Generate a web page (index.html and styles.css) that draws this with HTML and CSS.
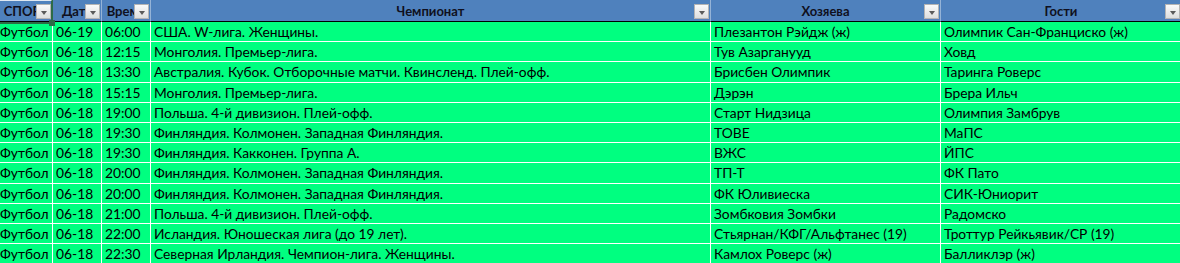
FILE: index.html
```html
<!DOCTYPE html>
<html lang="ru">
<head>
<meta charset="utf-8">
<title>Матчи</title>
<link rel="stylesheet" href="styles.css">
</head>
<body>
<div class="sheet">
  <div class="grid">
    <div class="hcell"><span class="htext">СПОРТ</span><span class="filter"></span></div>
    <div class="hcell"><span class="htext">Дата</span><span class="filter"></span></div>
    <div class="hcell"><span class="htext">Время</span><span class="filter"></span></div>
    <div class="hcell"><span class="htext">Чемпионат</span><span class="filter"></span></div>
    <div class="hcell"><span class="htext">Хозяева</span><span class="filter"></span></div>
    <div class="hcell last"><span class="htext">Гости</span><span class="filter"></span></div>

    <div class="cell">Футбол</div><div class="cell">06-19</div><div class="cell">06:00</div><div class="cell">США. W-лига. Женщины.</div><div class="cell">Плезантон Рэйдж (ж)</div><div class="cell last">Олимпик Сан-Франциско (ж)</div>
    <div class="cell">Футбол</div><div class="cell">06-18</div><div class="cell">12:15</div><div class="cell">Монголия. Премьер-лига.</div><div class="cell">Тув Азарганууд</div><div class="cell last">Ховд</div>
    <div class="cell">Футбол</div><div class="cell">06-18</div><div class="cell">13:30</div><div class="cell">Австралия. Кубок. Отборочные матчи. Квинсленд. Плей-офф.</div><div class="cell">Брисбен Олимпик</div><div class="cell last">Таринга Роверс</div>
    <div class="cell">Футбол</div><div class="cell">06-18</div><div class="cell">15:15</div><div class="cell">Монголия. Премьер-лига.</div><div class="cell">Дэрэн</div><div class="cell last">Брера Ильч</div>
    <div class="cell">Футбол</div><div class="cell">06-18</div><div class="cell">19:00</div><div class="cell">Польша. 4-й дивизион. Плей-офф.</div><div class="cell">Старт Нидзица</div><div class="cell last">Олимпия Замбрув</div>
    <div class="cell">Футбол</div><div class="cell">06-18</div><div class="cell">19:30</div><div class="cell">Финляндия. Колмонен. Западная Финляндия.</div><div class="cell">ТОВЕ</div><div class="cell last">МаПС</div>
    <div class="cell">Футбол</div><div class="cell">06-18</div><div class="cell">19:30</div><div class="cell">Финляндия. Какконен. Группа А.</div><div class="cell">ВЖС</div><div class="cell last">ЙПС</div>
    <div class="cell">Футбол</div><div class="cell">06-18</div><div class="cell">20:00</div><div class="cell">Финляндия. Колмонен. Западная Финляндия.</div><div class="cell">ТП-Т</div><div class="cell last">ФК Пато</div>
    <div class="cell">Футбол</div><div class="cell">06-18</div><div class="cell">20:00</div><div class="cell">Финляндия. Колмонен. Западная Финляндия.</div><div class="cell">ФК Юливиеска</div><div class="cell last">СИК-Юниорит</div>
    <div class="cell">Футбол</div><div class="cell">06-18</div><div class="cell">21:00</div><div class="cell">Польша. 4-й дивизион. Плей-офф.</div><div class="cell">Зомбковия Зомбки</div><div class="cell last">Радомско</div>
    <div class="cell">Футбол</div><div class="cell">06-18</div><div class="cell">22:00</div><div class="cell">Исландия. Юношеская лига (до 19 лет).</div><div class="cell">Стьярнан/КФГ/Альфтанес (19)</div><div class="cell last">Троттур Рейкьявик/СР (19)</div>
    <div class="cell">Футбол</div><div class="cell">06-18</div><div class="cell">22:30</div><div class="cell">Северная Ирландия. Чемпион-лига. Женщины.</div><div class="cell">Камлох Роверс (ж)</div><div class="cell last">Балликлэр (ж)</div>
  </div>
  <div class="selection"><span class="handle"></span></div>
</div>
</body>
</html>
```

FILE: styles.css
```css
html, body {
  margin: 0;
  padding: 0;
  background: #ffffff;
}
body {
  font-family: Lato, "Liberation Sans", Arial, sans-serif;
  font-size: 13.8px;
  color: #000;
  overflow: hidden;
}
.sheet {
  position: relative;
  width: 1180px;
  height: 263px;
  overflow: hidden;
}
.grid {
  display: grid;
  grid-template-columns: 53px 49px 49px 560px 230px 240px;
  grid-template-rows: 22px;
  grid-auto-rows: 20.2px;
}
.hcell {
  position: relative;
  background: #4f81bd;
  border-right: 1px solid #95b3d7;
  border-bottom: 1px solid #000;
  height: 22px;
  box-sizing: border-box;
  display: flex;
  align-items: center;
  justify-content: center;
  font-weight: bold;
  font-size: 13px;
  color: #0f1020;
  overflow: hidden;
  white-space: nowrap;
}
.hcell.last { border-right: none; }
.htext { line-height: 20px; }
.filter {
  position: absolute;
  right: 1px;
  top: 4px;
  width: 15px;
  height: 15px;
  box-sizing: border-box;
  border: 1px solid #b4b4b4;
  background: linear-gradient(#fafafa, #dedede);
}
.filter::after {
  content: "";
  position: absolute;
  left: 4px;
  top: 6px;
  width: 0;
  height: 0;
  border-left: 3px solid transparent;
  border-right: 3px solid transparent;
  border-top: 4px solid #5a5a5a;
}
.cell {
  background: #00ff80;
  border-right: 1px solid #fff;
  border-bottom: 1px solid #fff;
  box-sizing: border-box;
  padding-left: 3px;
  line-height: 19px;
  white-space: nowrap;
  overflow: hidden;
}
.grid > .cell:nth-child(6n+1) { padding-left: 0; }
.cell.last { border-right: none; }
.selection {
  position: absolute;
  left: -2px;
  top: -1px;
  width: 53px;
  height: 21px;
  border: 2px solid #2d6b47;
  border-top-color: #dfe8f2;
  border-left: none;
  box-sizing: content-box;
}
.handle {
  position: absolute;
  right: -4px;
  bottom: -4px;
  width: 6px;
  height: 6px;
  background: #2d6b47;
}
```
